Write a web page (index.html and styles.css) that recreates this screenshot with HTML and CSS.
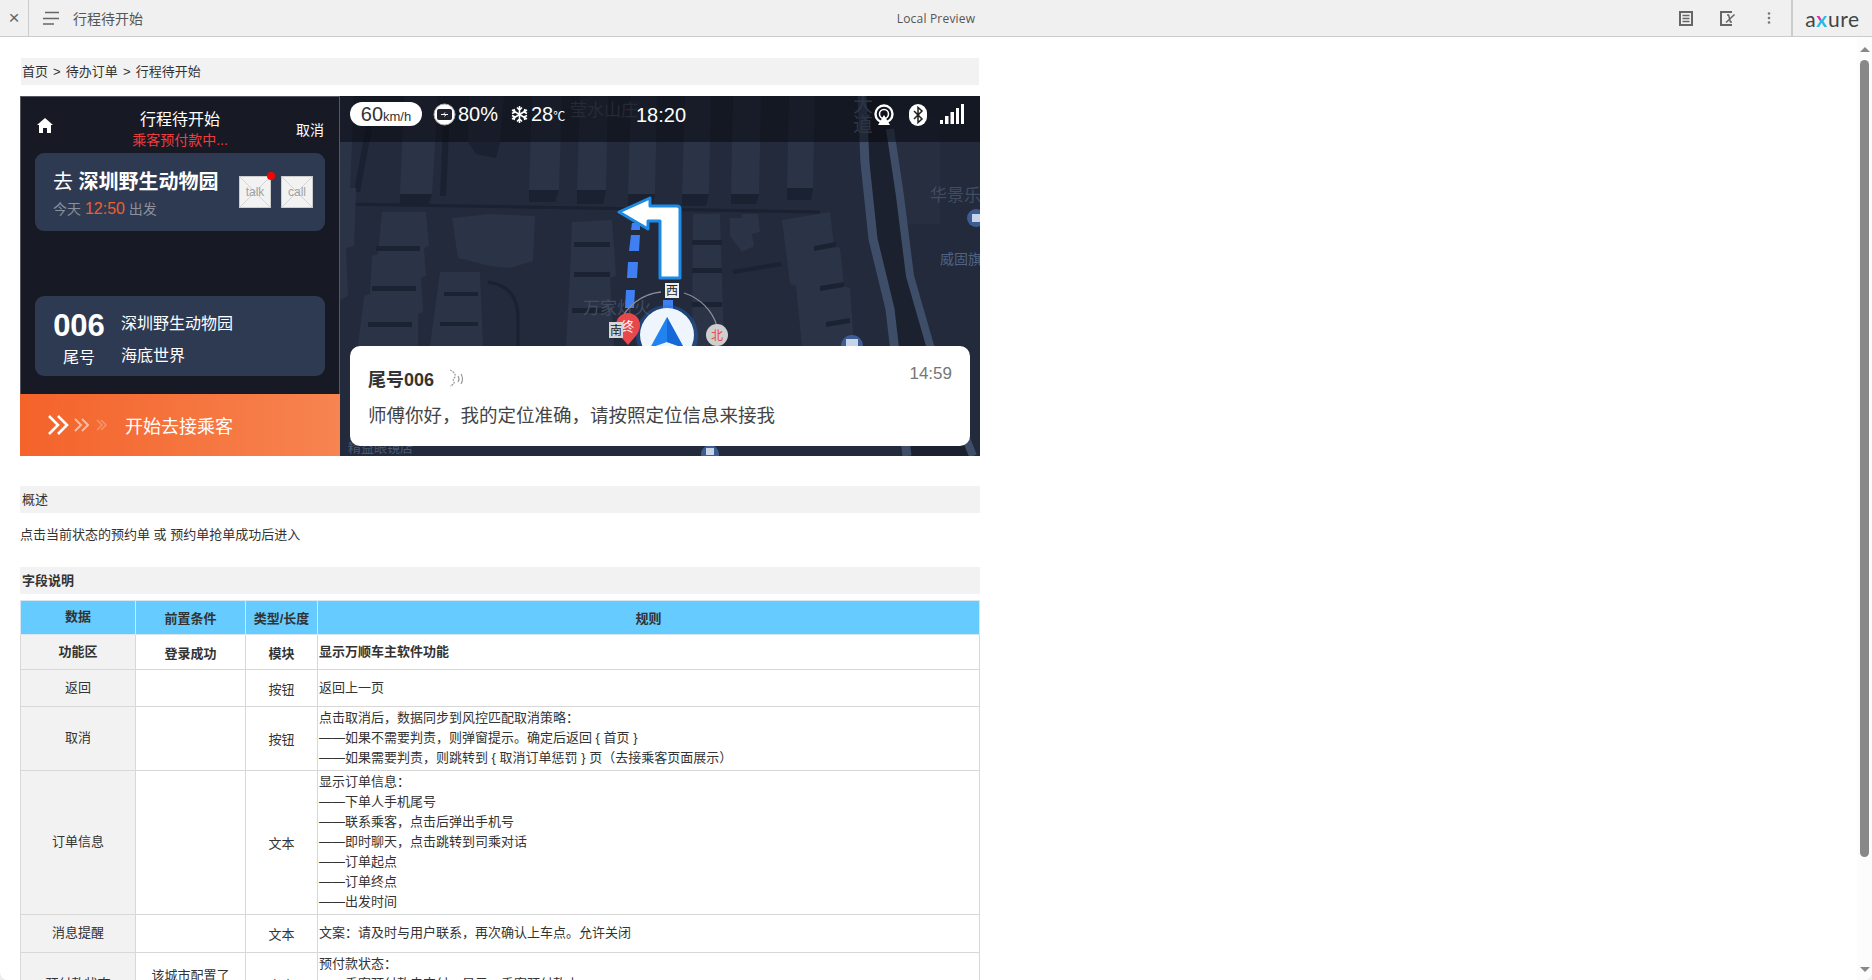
FILE: index.html
```html
<!DOCTYPE html>
<html lang="en">
<head>
    <meta charset="UTF-8">
    <meta name="viewport" content="width=device-width, initial-scale=1.0">
    <title>行程待开始</title>
    <link rel="stylesheet" href="styles.css">
</head>
<body>
    <header class="topbar">
        <div class="close-box">×</div>
        <svg class="menu-icon" width="16" height="14" viewBox="0 0 16 14">
            <path d="M2 1.5H16M0 7.5H16M0 13H11" stroke="#666" stroke-width="1.6" fill="none"/>
        </svg>
        <div class="page-name">行程待开始</div>
        <div class="preview-label">Local Preview</div>
        <div class="tools">
            <svg width="14" height="15" viewBox="0 0 14 15">
                <rect x="1" y="1" width="12" height="13" fill="none" stroke="#666" stroke-width="2"/>
                <path d="M3.5 4.5H10.5M3.5 7.5H10.5M3.5 10.5H10.5" stroke="#666" stroke-width="1.4"/>
            </svg>
            <svg width="16" height="15" viewBox="0 0 16 15">
                <path d="M12 1H1V14H12" fill="none" stroke="#666" stroke-width="2"/>
                <path d="M7 4H8.6L10.4 11H12M14.5 3.5L6 11.5" fill="none" stroke="#666" stroke-width="1.5"/>
            </svg>
            <svg class="tool-dots" width="4" height="12" viewBox="0 0 4 12">
                <circle cx="2" cy="1.5" r="1.3" fill="#777"/>
                <circle cx="2" cy="6" r="1.3" fill="#777"/>
                <circle cx="2" cy="10.5" r="1.3" fill="#777"/>
            </svg>
        </div>
        <div class="logo-box"><span>a</span><span class="logo-x">x</span><span>ure</span></div>
    </header>

    <main class="preview">
        <div class="band crumb">首页 &gt; 待办订单 &gt; 行程待开始</div>

        <section class="phone">
            <div class="side">
                <div class="side-head">
                    <svg class="home-icon" width="16" height="15" viewBox="0 0 16 15">
                        <path d="M8 0L16 7H14V15H10V10H6V15H2V7H0Z" fill="#fff"/>
                    </svg>
                    <div class="side-title">行程待开始</div>
                    <div class="side-status">乘客预付款中...</div>
                    <div class="side-cancel">取消</div>
                </div>

                <div class="card card-dest">
                    <div class="dest-text">
                        <div class="dest-line">去 <strong>深圳野生动物园</strong></div>
                        <div class="dest-time">今天 <span class="time-num">12:50</span> 出发</div>
                    </div>
                    <div class="ph-box ph-talk">talk<i class="red-dot"></i></div>
                    <div class="ph-box ph-call">call</div>
                </div>

                <div class="card card-order">
                    <div class="tail">
                        <div class="tail-num">006</div>
                        <div class="tail-label">尾号</div>
                    </div>
                    <div class="route">
                        <div>深圳野生动物园</div>
                        <div>海底世界</div>
                    </div>
                </div>

                <div class="start-btn">
                    <svg width="60" height="22" viewBox="0 0 60 22">
                        <path d="M1 2L10 11L1 20M10 2L19 11L10 20" fill="none" stroke="#fff" stroke-width="2.6"/>
                        <path d="M27 5L33 11L27 17M34 5L40 11L34 17" fill="none" stroke="#fff" stroke-opacity=".55" stroke-width="2"/>
                        <path d="M49 6L54 11L49 16M53 6L58 11L53 16" fill="none" stroke="#fff" stroke-opacity=".28" stroke-width="1.5"/>
                    </svg>
                    <span>开始去接乘客</span>
                </div>
            </div>

            <div class="map">
                <svg class="map-art" width="640" height="360" viewBox="0 0 640 360">
                    <rect width="640" height="360" fill="#222a3b"/>
                    <!-- upper row of buildings -->
                    <g fill="#2b3447">
                        <path d="M-5 0H14L10 96H-5Z"/>
                        <path d="M64 0H98L92 98H60Z"/>
                        <path d="M129 0H164L160 46H128Z"/>
                        <path d="M192 0H222L219 94H189Z"/>
                        <path d="M240 0H268L266 94H237Z"/>
                        <path d="M291 0H317L315 98H288Z"/>
                        <path d="M345 0H371L369 98H342Z"/>
                        <path d="M393 0H421L419 98H391Z"/>
                        <path d="M449 0H475L473 92H447Z"/>
                    </g>
                    <g fill="#1a2231">
                        <path d="M60 98H92L88 110H60Z"/>
                        <path d="M128 46H160L156 62L136 58Z"/>
                        <path d="M189 94H219L215 106H189Z"/>
                        <path d="M237 94H266L263 108H237Z"/>
                        <path d="M288 98H315L312 110H288Z"/>
                        <path d="M342 98H369L366 110H342Z"/>
                        <path d="M391 98H419L416 108H391Z"/>
                        <path d="M447 92H473L471 104H447Z"/>
                        <path d="M28 20L34 20L20 96L14 96Z"/>
                        <path d="M104 10L110 10L106 100L100 100Z"/>
                    </g>
                    <path d="M0 108L480 116" fill="none" stroke="#1a2130" stroke-width="3"/>
                    <path d="M148 186Q178 190 178 222V250" fill="none" stroke="#1a2130" stroke-width="3"/>
                    <!-- lower blocks -->
                    <g fill="#2b3447">
                        <path d="M-5 92H16L14 150L6 152L8 200L0 204V250H-5Z"/>
                        <path d="M42 116H86L89 150L84 152L86 180L81 182L83 216L78 218L78 250H18L24 200L30 198L32 160L38 158Z"/>
                        <path d="M112 122L150 118L195 120L193 165L170 172L150 170L118 162Z"/>
                        <path d="M100 176H140L143 250H90Z"/>
                        <path d="M232 126L272 124L276 180L270 182L274 250H226L230 180Z"/>
                        <path d="M353 118H380L384 250H352Z"/>
                        <path d="M390 122H402V118H418L420 136L412 138L414 150L402 156L396 148L390 140Z"/>
                        <path d="M442 124L490 116L494 150L500 152L504 190L510 192L514 250H462L456 190L450 188Z"/>
                    </g>
                    <g fill="#1b2333">
                        <rect x="36" y="150" width="44" height="5"/>
                        <rect x="32" y="190" width="44" height="5"/>
                        <rect x="28" y="226" width="44" height="5"/>
                        <rect x="104" y="196" width="34" height="4"/>
                        <rect x="100" y="226" width="38" height="4"/>
                        <rect x="234" y="146" width="36" height="5"/>
                        <rect x="234" y="176" width="36" height="5"/>
                        <rect x="232" y="212" width="36" height="5"/>
                        <rect x="352" y="144" width="30" height="5"/>
                        <rect x="352" y="172" width="30" height="5"/>
                        <rect x="352" y="206" width="30" height="5"/>
                        <path d="M474 150L496 146V151L474 155ZM480 190L504 186V191L480 195ZM486 226L510 222V227L486 231Z"/>
                        <path d="M392 174L440 166L442 170L394 178Z"/>
                    </g>
                    <path d="M540 20H600V128H555Z" fill="#262e40"/>
                    <!-- road -->
                    <path d="M522 0L525 67L533 143L550 213L567 360H633L593 260L570 180L560 100L550 33V0Z" fill="#1b212e"/>
                    <path d="M522 0L525 67L533 143L550 213L567 360" fill="none" stroke="#3f4e68" stroke-width="9"/>
                    <path d="M550 33L560 100L570 180L593 260L633 360" fill="none" stroke="#3f4e68" stroke-width="8"/>

                    <g class="map-label">
                        <text x="590" y="105">华景乐</text>
                        <text x="600" y="168" class="map-label-blue">威固旗</text>
                        <text x="513" y="16" class="map-label-road">大</text>
                        <text x="513" y="36" class="map-label-road">道</text>
                        <text x="243" y="218">万家灯火</text>
                        <text x="230" y="20" class="map-label-dark">莹水山庄</text>
                        <text x="8" y="356" class="map-label-small">精益眼镜店</text>
                    </g>
                    <circle cx="636" cy="122" r="9" fill="#3d5c94"/>
                    <rect x="632" y="118" width="8" height="8" fill="#c7d3e6"/>
                    <circle cx="512" cy="250" r="11" fill="#3d5c94"/>
                    <rect x="506" y="243" width="12" height="8" fill="#c7d3e6"/>
                    <circle cx="370" cy="358" r="9" fill="#3d5c94"/>
                    <rect x="366" y="352" width="8" height="7" fill="#c7d3e6"/>

                    <!-- route and turn arrow -->
                    <g fill="#3f7ff2">
                        <path d="M292 127H300V134H291Z"/>
                        <path d="M291 139H300L299 155H289Z"/>
                        <path d="M288 166H298L297 182H287Z"/>
                        <path d="M286 194H295L294 212H285Z"/>
                        <rect x="323" y="204" width="10" height="12"/>
                    </g>
                    <path d="M279 116L310 102V110H337Q340 110 340 113V182H320V125H308V133Z" fill="#fff" stroke="#1d8ae6" stroke-width="3" stroke-linejoin="round"/>

                    <path d="M279 228A50 50 0 0 1 321 196M344 197A50 50 0 0 1 377 230" fill="none" stroke="#8a8f98" stroke-width="1.3"/>
                    <circle cx="327" cy="240" r="31" fill="#1f6fe0" fill-opacity=".35"/>
                    <path d="M288 249C280 240 276 236 276 229A12 12 0 0 1 300 229C300 236 296 240 288 249Z" fill="#e8474c"/>
                    <text x="281" y="235" class="pin-text">终</text>
                    <rect x="269" y="226" width="14" height="16" fill="#d7d7d7"/>
                    <text x="270" y="239" class="compass-text">南</text>
                    <rect x="325" y="187" width="14" height="15" fill="#eee"/>
                    <text x="326" y="199" class="compass-text">西</text>
                    <circle cx="377" cy="239" r="11" fill="#cfcfcf"/>
                    <text x="371" y="244" class="compass-red">北</text>
                    <circle cx="327" cy="239" r="27" fill="#eef5fd"/>
                    <path d="M327 221L344 252L327 246L310 252Z" fill="#2083f0"/>
                    <path d="M327 221L344 252L327 246Z" fill="#1668d8"/>
                </svg>

                <div class="status-bar">
                    <div class="speed">60<small>km/h</small></div>
                    <svg class="st-battery" width="23" height="23" viewBox="0 0 23 23">
                        <circle cx="11.5" cy="11.5" r="10.5" fill="#fff" stroke="#aaa" stroke-width="1"/>
                        <rect x="4" y="6" width="15" height="11" rx="2" fill="#1f2430"/>
                        <path d="M8 11.5H15M12 9.5L10.5 11.5H13L11.5 13.5" stroke="#fff" stroke-width="1" fill="none"/>
                    </svg>
                    <span class="st-text st-pct">80%</span>
                    <svg class="st-snow" width="19" height="19" viewBox="0 0 19 19">
                        <path d="M9.5 1V18M2 5L17 14M17 5L2 14M7 2.5L9.5 5L12 2.5M7 16.5L9.5 14L12 16.5M2 8.5L5 7L4 4M17 8.5L14 7L15 4M2 10.5L5 12L4 15M17 10.5L14 12L15 15" stroke="#fff" stroke-width="1.6" fill="none"/>
                    </svg>
                    <span class="st-text st-temp">28<small>℃</small></span>
                    <span class="st-text st-clock">18:20</span>
                    <svg class="st-wifi" width="22" height="21" viewBox="0 0 22 21">
                        <circle cx="11" cy="10" r="8.5" fill="none" stroke="#fff" stroke-width="2.4"/>
                        <circle cx="11" cy="10" r="4.5" fill="none" stroke="#fff" stroke-width="1.6"/>
                        <path d="M11 11L17 21H5Z" fill="#fff"/>
                    </svg>
                    <svg class="st-blue" width="18" height="22" viewBox="0 0 18 22">
                        <rect width="18" height="22" rx="9" fill="#fff"/>
                        <path d="M5 7L13 15L9 18.5V3.5L13 7L5 15" fill="none" stroke="#222" stroke-width="1.5"/>
                    </svg>
                    <svg class="st-signal" width="24" height="20" viewBox="0 0 24 20">
                        <rect x="0" y="16" width="3" height="4" fill="#fff"/>
                        <rect x="5" y="12" width="3.5" height="8" fill="#fff"/>
                        <rect x="10.5" y="8" width="3.5" height="12" fill="#fff"/>
                        <rect x="16" y="4" width="3" height="16" fill="#fff"/>
                        <rect x="21" y="0" width="3" height="20" fill="#fff"/>
                    </svg>
                </div>

                <div class="message">
                    <div class="msg-head">
                        <strong>尾号006</strong>
                        <svg class="msg-sound" width="17" height="18" viewBox="0 0 17 18">
                            <path d="M1 1C4 2 7 5 6 8C5 10 3 10 5 12C6 14 4 16 1 17" fill="none" stroke="#999" stroke-width="1.2" stroke-dasharray="2 1"/>
                            <path d="M9 7Q11 10 9 13M12 5Q15 10 12 15" fill="none" stroke="#999" stroke-width="1.2"/>
                        </svg>
                        <span class="msg-time">14:59</span>
                    </div>
                    <div class="msg-body">师傅你好，我的定位准确，请按照定位信息来接我</div>
                </div>
            </div>
        </section>

        <div class="band band-wide band-overview">概述</div>
        <p class="intro">点击当前状态的预约单 或 预约单抢单成功后进入</p>
        <div class="band band-wide band-bold">字段说明</div>

        <table class="fields">
            <colgroup>
                <col class="col-a">
                <col class="col-b">
                <col class="col-c">
                <col class="col-d">
            </colgroup>
            <thead>
                <tr class="row-head">
                    <th class="raise">数据</th>
                    <th>前置条件</th>
                    <th>类型/长度</th>
                    <th>规则</th>
                </tr>
            </thead>
            <tbody>
                <tr class="row-35 bold-row">
                    <td class="name">功能区</td>
                    <td class="mid">登录成功</td>
                    <td class="mid">模块</td>
                    <td>显示万顺车主软件功能</td>
                </tr>
                <tr class="row-37">
                    <td class="name">返回</td>
                    <td class="mid"></td>
                    <td class="mid">按钮</td>
                    <td>返回上一页</td>
                </tr>
                <tr>
                    <td class="name">取消</td>
                    <td class="mid"></td>
                    <td class="mid">按钮</td>
                    <td>点击取消后，数据同步到风控匹配取消策略：<br>——如果不需要判责，则弹窗提示。确定后返回 { 首页 }<br>——如果需要判责，则跳转到 { 取消订单惩罚 } 页（去接乘客页面展示）</td>
                </tr>
                <tr>
                    <td class="name">订单信息</td>
                    <td class="mid"></td>
                    <td class="mid">文本</td>
                    <td>显示订单信息：<br>——下单人手机尾号<br>——联系乘客，点击后弹出手机号<br>——即时聊天，点击跳转到司乘对话<br>——订单起点<br>——订单终点<br>——出发时间</td>
                </tr>
                <tr class="row-38">
                    <td class="name">消息提醒</td>
                    <td class="mid"></td>
                    <td class="mid">文本</td>
                    <td>文案：请及时与用户联系，再次确认上车点。允许关闭</td>
                </tr>
                <tr>
                    <td class="name">预付款状态</td>
                    <td class="mid">该城市配置了<br>预付款</td>
                    <td class="mid">文本</td>
                    <td>预付款状态：<br>——乘客预付款未支付，显示：乘客预付款中<br>——乘客预付款已支付，不显示</td>
                </tr>
            </tbody>
        </table>

        <div class="scrollbar">
            <i class="arrow-up"></i>
            <i class="thumb"></i>
            <i class="arrow-down"></i>
        </div>
    </main>
</body>
</html>
```

FILE: styles.css
```css
* {
    box-sizing: border-box;
    margin: 0;
    padding: 0;
}

html, body {
    height: 100%;
    overflow: hidden;
}

body {
    font-family: "Liberation Sans", "Noto Sans CJK SC", sans-serif;
    font-size: 13px;
    color: #333;
    background-color: #ececec;
    display: flex;
    flex-direction: column;
}

/* top bar */
.topbar {
    position: relative;
    height: 37px;
    flex: none;
    display: flex;
    align-items: center;
    background-color: #f0f0f0;
    border-bottom: 1px solid #ccc;
    color: #555;
}

.close-box {
    width: 29px;
    height: 36px;
    line-height: 35px;
    text-align: center;
    font-size: 19px;
    color: #666;
    border-right: 1px solid #ccc;
}

.menu-icon {
    margin-left: 14px;
}

.page-name {
    margin-left: 14px;
    font-size: 14px;
}

.preview-label {
    position: absolute;
    left: 0;
    right: 0;
    text-align: center;
    font-family: "Open Sans", sans-serif;
    font-size: 12px;
    letter-spacing: 0.2px;
    pointer-events: none;
}

.tools {
    margin-left: auto;
    display: flex;
    align-items: center;
    gap: 27px;
    padding-right: 20px;
}

.tool-dots {
    margin-left: 4px;
}

.logo-box {
    width: 81px;
    height: 36px;
    display: flex;
    align-items: center;
    justify-content: center;
    border-left: 2px solid #ccc;
    font-family: "Lato", sans-serif;
    font-size: 21px;
    letter-spacing: 0.6px;
    color: #444;
}

.logo-x {
    font-weight: 700;
    color: transparent;
    background: linear-gradient(135deg, #ec2d9b 50%, #28b7e6 50%);
    -webkit-background-clip: text;
    background-clip: text;
}

/* page area */
.preview {
    position: relative;
    flex: 1;
    min-height: 0;
    overflow: hidden;
    background-color: white;
    border-radius: 0 0 8px 8px;
    padding: 21px 0 0 20px;
}

.band {
    height: 27px;
    line-height: 27px;
    width: 958px;
    margin-left: 1px;
    padding-left: 1px;
    background-color: #f2f2f2;
}

.crumb {
    word-spacing: 1.5px;
}

.band-wide {
    width: 960px;
    margin-left: 0;
    padding-left: 2px;
}

.band-overview {
    margin-top: 30px;
}

.band-bold {
    font-weight: 700;
}

.intro {
    height: 54px;
    line-height: 43px;
}

/* phone mockup */
.phone {
    display: flex;
    width: 960px;
    height: 360px;
    margin-top: 11px;
}

.side {
    position: relative;
    width: 320px;
    flex: none;
    display: flex;
    flex-direction: column;
    background-color: #171a24;
    border: 1px solid #55585f;
    border-bottom: none;
    color: white;
}

.side-head {
    position: relative;
    height: 56px;
}

.home-icon {
    position: absolute;
    left: 16px;
    top: 21px;
}

.side-title {
    position: absolute;
    top: 11px;
    left: 0;
    right: 0;
    text-align: center;
    font-size: 16px;
    line-height: 24px;
}

.side-status {
    position: absolute;
    top: 33px;
    left: 0;
    right: 0;
    text-align: center;
    font-size: 14px;
    line-height: 20px;
    color: #ef3d3f;
}

.side-cancel {
    position: absolute;
    right: 15px;
    top: 23px;
    font-size: 14px;
    line-height: 20px;
}

.card {
    margin-left: 14px;
    width: 290px;
    background-color: #2e3a52;
    border-radius: 9px;
}

.card-dest {
    height: 78px;
    display: flex;
    padding: 15px 0 0 18px;
}

.dest-text {
    width: 186px;
}

.dest-line {
    font-size: 20px;
    line-height: 28px;
    white-space: nowrap;
}

.dest-line strong {
    font-weight: 700;
}

.dest-time {
    margin-top: 3px;
    font-size: 14px;
    line-height: 20px;
    color: #8b909b;
    white-space: nowrap;
}

.time-num {
    font-size: 16px;
    color: #ee5f2e;
}

.ph-box {
    position: relative;
    width: 32px;
    height: 32px;
    margin-top: 8px;
    text-align: center;
    line-height: 30px;
    font-size: 12px;
    color: #a2a2a2;
    border: 1px solid #ccc;
    background-color: #f2f2f2;
    background-image:
        linear-gradient(45deg, transparent 49%, #d4d4d4 49%, #d4d4d4 51%, transparent 51%),
        linear-gradient(-45deg, transparent 49%, #d4d4d4 49%, #d4d4d4 51%, transparent 51%);
}

.ph-call {
    margin-left: 10px;
}

.red-dot {
    position: absolute;
    top: -5px;
    right: -5px;
    width: 8px;
    height: 8px;
    border-radius: 50%;
    background-color: red;
}

.card-order {
    height: 80px;
    margin-top: 65px;
    display: flex;
    padding: 13px 0 0 17px;
}

.tail {
    width: 54px;
    text-align: center;
}

.tail-num {
    font-size: 31px;
    font-weight: 700;
    line-height: 34px;
}

.tail-label {
    margin-top: 4px;
    font-size: 16px;
    line-height: 22px;
}

.route {
    margin-left: 15px;
    font-size: 16px;
    line-height: 32px;
    margin-top: -1px;
}

.start-btn {
    position: absolute;
    left: -1px;
    right: -1px;
    bottom: 0;
    height: 62px;
    display: flex;
    align-items: center;
    gap: 17px;
    padding-left: 28px;
    font-size: 18px;
    background: linear-gradient(90deg, #f4632a, #f78451);
}

/* map */
.map {
    position: relative;
    flex: 1;
    overflow: hidden;
}

.map-art {
    position: absolute;
    left: 0;
    top: 0;
}

.map-label text {
    font-size: 17px;
    fill: #414c60;
}

.map-label .map-label-blue {
    fill: #4f6484;
    font-size: 14px;
}

.map-label .map-label-road {
    fill: #5a6b88;
    font-size: 20px;
}

.map-label .map-label-dark {
    fill: #4a5366;
}

.map-label .map-label-small {
    fill: #4a5a75;
    font-size: 13px;
}

.pin-text {
    font-size: 13px;
    fill: #fff;
}

.compass-text {
    font-size: 12px;
    fill: #222;
}

.compass-red {
    font-size: 12px;
    fill: #ea4a4a;
}

.status-bar {
    position: absolute;
    left: 0;
    top: 0;
    right: 0;
    height: 46px;
    background-color: rgba(8, 10, 15, 0.55);
    color: white;
}

.status-bar > * {
    position: absolute;
}

.speed {
    left: 10px;
    top: 6px;
    width: 72px;
    height: 24px;
    line-height: 24px;
    text-align: center;
    font-size: 20px;
    color: #333;
    background-color: white;
    border-radius: 12px;
}

.speed small {
    font-size: 13px;
}

.st-text {
    font-size: 20px;
    line-height: 24px;
    top: 6px;
}

.st-battery {
    left: 93px;
    top: 7px;
}

.st-pct {
    left: 118px;
}

.st-snow {
    left: 170px;
    top: 9px;
}

.st-temp {
    left: 191px;
}

.st-temp small {
    font-size: 12px;
}

.st-clock {
    left: 296px;
    top: 7px;
}

.st-wifi {
    left: 533px;
    top: 8px;
}

.st-blue {
    left: 569px;
    top: 8px;
}

.st-signal {
    left: 600px;
    top: 8px;
}

.message {
    position: absolute;
    left: 10px;
    top: 250px;
    width: 620px;
    height: 100px;
    padding: 19px 18px 0 18px;
    background-color: white;
    border-radius: 10px;
    color: #444;
}

.msg-head {
    display: flex;
    align-items: center;
    height: 26px;
}

.msg-head strong {
    font-size: 18px;
    color: #333;
}

.msg-sound {
    margin-left: 15px;
}

.msg-time {
    margin-left: auto;
    margin-top: -9px;
    font-size: 17px;
    color: #777;
}

.msg-body {
    margin-top: 11px;
    font-size: 18.5px;
    line-height: 28px;
    white-space: nowrap;
}

/* field table */
.fields {
    width: 960px;
    margin-top: 6px;
    border-collapse: collapse;
    table-layout: fixed;
    line-height: 20px;
}

.col-a {
    width: 115px;
}

.col-b {
    width: 110px;
}

.col-c {
    width: 72px;
}

.fields th, .fields td {
    border: 1px solid #d8d8d8;
    padding: 1px 1px 2px;
    vertical-align: middle;
}

.fields th {
    background-color: #66ccff;
    font-weight: 700;
    padding-top: 4px;
    height: 34px;
    border-color: #d8e6ee;
}

.fields th.raise {
    padding-top: 0;
}

.row-35 td {
    height: 35px;
}

.row-37 td {
    height: 37px;
}

.row-38 td {
    height: 38px;
}

.bold-row td {
    font-weight: 700;
}

.name {
    text-align: center;
    background-color: #f2f2f2;
}

.fields .mid {
    text-align: center;
    padding-top: 3px;
    padding-bottom: 0;
}

.scrollbar {
    position: absolute;
    top: 0;
    right: 0;
    bottom: 0;
    width: 15px;
    background-color: #fcfcfc;
}

.arrow-up {
    position: absolute;
    left: 3px;
    top: 10px;
    border: 5px solid transparent;
    border-top: none;
    border-bottom: 5px solid #888;
}

.thumb {
    position: absolute;
    left: 3px;
    top: 23px;
    width: 9px;
    height: 797px;
    border-radius: 5px;
    background-color: #888;
}

.arrow-down {
    position: absolute;
    left: 3px;
    bottom: 8px;
    border: 5px solid transparent;
    border-bottom: none;
    border-top: 5px solid #888;
}
```
